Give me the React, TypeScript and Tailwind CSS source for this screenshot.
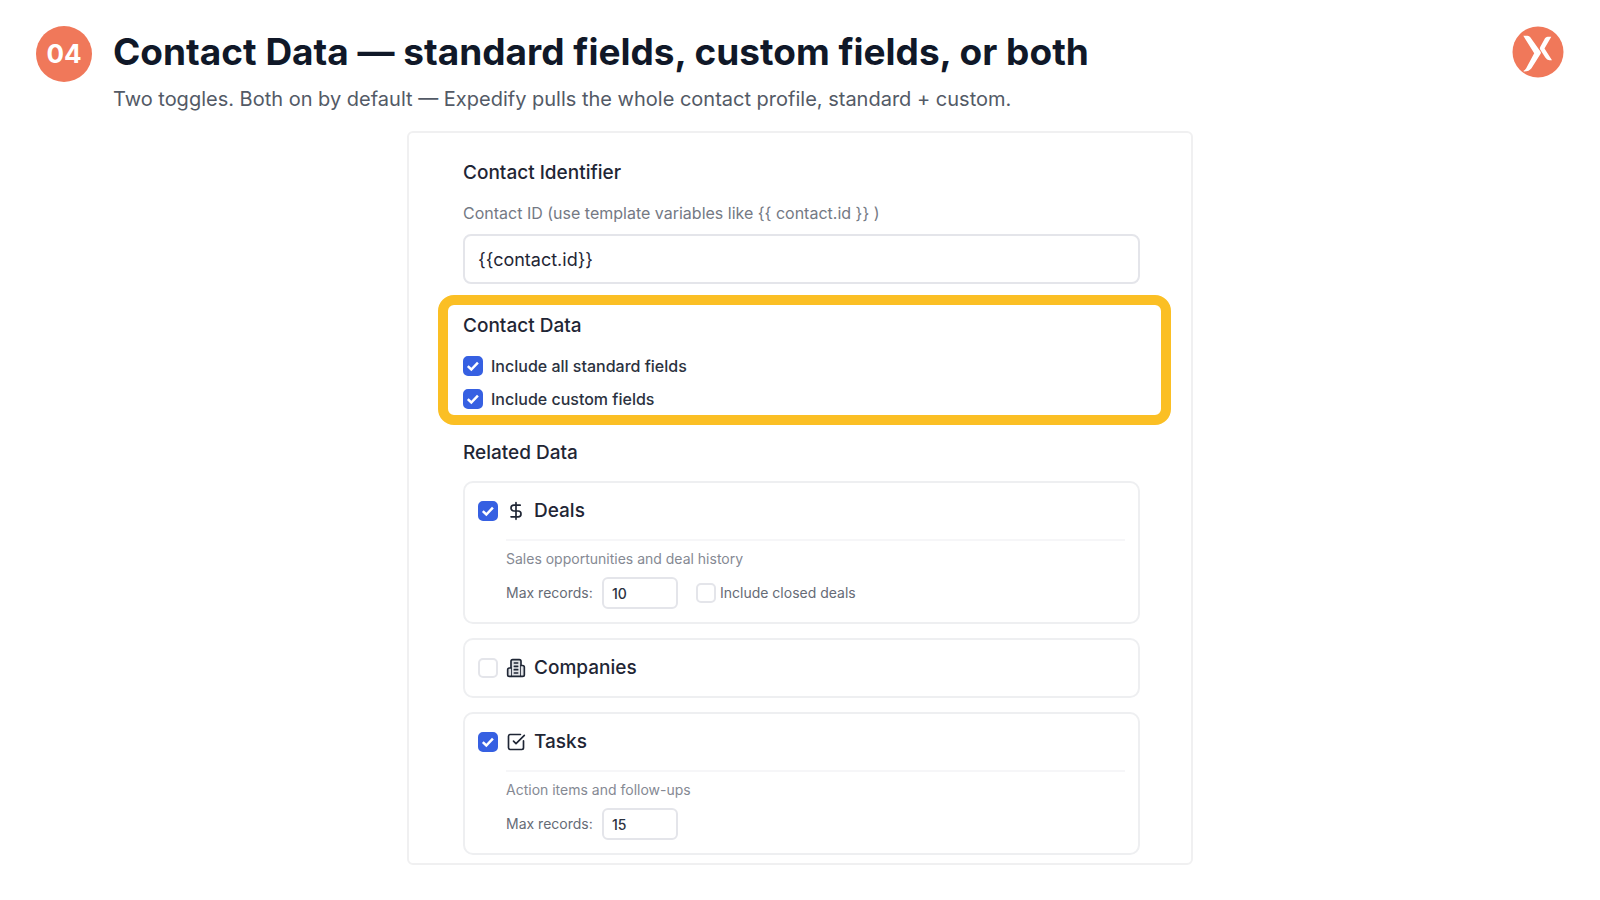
import { useId, useState, type ReactNode } from 'react';
import { DollarSign, SquareCheckBig } from 'lucide-react';

function Logo() {
  return (
    <svg viewBox="0 0 52 52" className="size-[52px] shrink-0" role="img" aria-label="Expedify">
      <circle cx="26" cy="26" r="25.5" fill="#f0785a" />
      <path d="M11.3 9.800H15.500Q17.300 9.800 18.300 11.300L28.600 25.800Q29.200 26.800 28.600 27.800L19.500 42.200Q17.300 45.300 12 45.600L11.300 45Q13.200 44 14.200 42.200L22.200 27.300Z" fill="#fff" />
      <path d="M39.300 10.800H35.600Q34 10.800 33 12.300L28.200 20.900Q27.400 22.400 28.300 23.800L33.300 31.600Q34.900 34.200 37.400 34.200H40L32.500 22.400Z" fill="#fff" />
    </svg>
  );
}

function BuildingIcon() {
  return (
    <svg
      viewBox="0 0 24 24"
      className="size-5"
      fill="none"
      stroke="currentColor"
      strokeWidth="2"
      strokeLinecap="round"
      strokeLinejoin="round"
      aria-hidden="true"
    >
      <path d="M6 22V4a2 2 0 0 1 2-2h8a2 2 0 0 1 2 2v18Z" fill="#dfe1e5" />
      <path d="M6 12H4a2 2 0 0 0-2 2v6a2 2 0 0 0 2 2h2" fill="#dfe1e5" />
      <path d="M18 9h2a2 2 0 0 1 2 2v9a2 2 0 0 1-2 2h-2" fill="#dfe1e5" />
      <path d="M10 6h4" />
      <path d="M10 10h4" />
      <path d="M10 14h4" />
      <path d="M10 18h4" />
    </svg>
  );
}

type CheckboxProps = {
  id: string;
  defaultChecked?: boolean;
};

function Checkbox({ id, defaultChecked = false }: CheckboxProps) {
  const [checked, setChecked] = useState(defaultChecked);

  return (
    <span className="grid size-5 shrink-0 place-items-center">
      <input
        id={id}
        type="checkbox"
        checked={checked}
        onChange={(e) => setChecked(e.target.checked)}
        className="col-start-1 row-start-1 size-5 appearance-none rounded-[5px] border-2 border-[#e4e5ea] bg-white checked:border-[#3660e2] checked:bg-[#3660e2]"
      />
      {checked ? (
        <svg viewBox="0 0 20 20" className="pointer-events-none col-start-1 row-start-1 size-5" fill="none" aria-hidden="true">
          <path d="M4.800 10.200l3.500 3.300 6.600-6.800" stroke="#fff" strokeWidth="2.500" />
        </svg>
      ) : null}
    </span>
  );
}

function SectionTitle({ children }: { children: ReactNode }) {
  return <h2 className="text-[19px] leading-6 font-medium text-[#1f2635]">{children}</h2>;
}

type FieldToggleProps = {
  label: string;
  defaultChecked?: boolean;
};

function FieldToggle({ label, defaultChecked }: FieldToggleProps) {
  const id = useId();

  return (
    <div className="flex items-center gap-2">
      <Checkbox id={id} defaultChecked={defaultChecked} />
      <label htmlFor={id} className="text-base leading-5 font-medium text-[#2b3240]">
        {label}
      </label>
    </div>
  );
}

type RelatedCardProps = {
  title: string;
  icon: ReactNode;
  defaultChecked?: boolean;
  children?: ReactNode;
};

function RelatedCard({ title, icon, defaultChecked, children }: RelatedCardProps) {
  const id = useId();

  return (
    <div className="rounded-[10px] border-2 border-[#eeeff1] px-[13px] py-[13px]">
      <div className="flex h-[30px] items-center gap-2">
        <Checkbox id={id} defaultChecked={defaultChecked} />
        <label htmlFor={id} className="flex items-center gap-2 text-[19px] leading-6 font-medium text-[#1f2635]">
          {icon}
          {title}
        </label>
      </div>
      {children}
    </div>
  );
}

type CardDetailsProps = {
  description: string;
  maxRecords: number;
  children?: ReactNode;
};

function CardDetails({ description, maxRecords, children }: CardDetailsProps) {
  const id = useId();

  return (
    <div className="mt-[13px] ml-7 border-t-2 border-[#f6f6f8] pt-2">
      <p className="text-sm leading-5 text-[#858993]">{description}</p>
      <div className="mt-2 flex items-center text-sm leading-5 text-[#666b76]">
        <label htmlFor={id} className="w-24">
          Max records:
        </label>
        <input
          id={id}
          type="text"
          inputMode="numeric"
          defaultValue={maxRecords}
          className="mr-[18px] h-8 w-[76px] rounded-md border-2 border-[#e4e5ea] px-2 text-sm font-medium text-[#2b3240]"
        />
        {children}
      </div>
    </div>
  );
}

function ClosedDealsToggle() {
  const id = useId();

  return (
    <div className="flex items-center gap-1">
      <Checkbox id={id} />
      <label htmlFor={id}>Include closed deals</label>
    </div>
  );
}

export default function App() {
  return (
    <div className="min-h-screen bg-white px-9 pt-[26px] pb-8 font-['Inter',sans-serif]">
      <header className="flex items-start">
        <div className="flex size-14 shrink-0 items-center justify-center rounded-full bg-[#f0785a] text-[26px] leading-8 font-bold text-white">
          04
        </div>
        <div className="ml-[21px] flex-1">
          <h1 className="text-[37px] leading-[52px] font-bold text-[#101828]">
            Contact Data — standard fields, custom fields, or both
          </h1>
          <p className="mt-[7px] text-xl leading-7 text-[#535a66]">
            Two toggles. Both on by default — Expedify pulls the whole contact profile, standard + custom.
          </p>
        </div>
        <Logo />
      </header>

      <main className="mx-auto mt-[18px] w-full max-w-[786px] rounded-md border-2 border-[#f0f0f1] pt-7 pr-[51px] pb-2 pl-[54px]">
        <section>
          <SectionTitle>Contact Identifier</SectionTitle>
          <label htmlFor="contact-id" className="mt-4 block text-base leading-6 text-[#747984]">
            {'Contact ID (use template variables like {{ contact.id }} )'}
          </label>
          <input
            id="contact-id"
            type="text"
            defaultValue="{{contact.id}}"
            className="mt-[9px] h-[50px] w-full rounded-lg border-2 border-[#e4e5ea] px-[13px] text-lg text-[#1f2635]"
          />
        </section>

        <section className="mt-[11px] -mr-[31px] -ml-[25px] rounded-2xl border-10 border-[#fbbf24] px-[15px] pt-[9px] pb-[6px]">
          <SectionTitle>Contact Data</SectionTitle>
          <div className="mt-[18px] flex flex-col gap-[13px]">
            <FieldToggle label="Include all standard fields" defaultChecked />
            <FieldToggle label="Include custom fields" defaultChecked />
          </div>
        </section>

        <section className="mt-4">
          <SectionTitle>Related Data</SectionTitle>
          <div className="mt-4 flex flex-col gap-[14px]">
            <RelatedCard title="Deals" icon={<DollarSign className="size-5" />} defaultChecked>
              <CardDetails description="Sales opportunities and deal history" maxRecords={10}>
                <ClosedDealsToggle />
              </CardDetails>
            </RelatedCard>
            <RelatedCard title="Companies" icon={<BuildingIcon />} />
            <RelatedCard title="Tasks" icon={<SquareCheckBig className="size-5" />} defaultChecked>
              <CardDetails description="Action items and follow-ups" maxRecords={15} />
            </RelatedCard>
          </div>
        </section>
      </main>
    </div>
  );
}
